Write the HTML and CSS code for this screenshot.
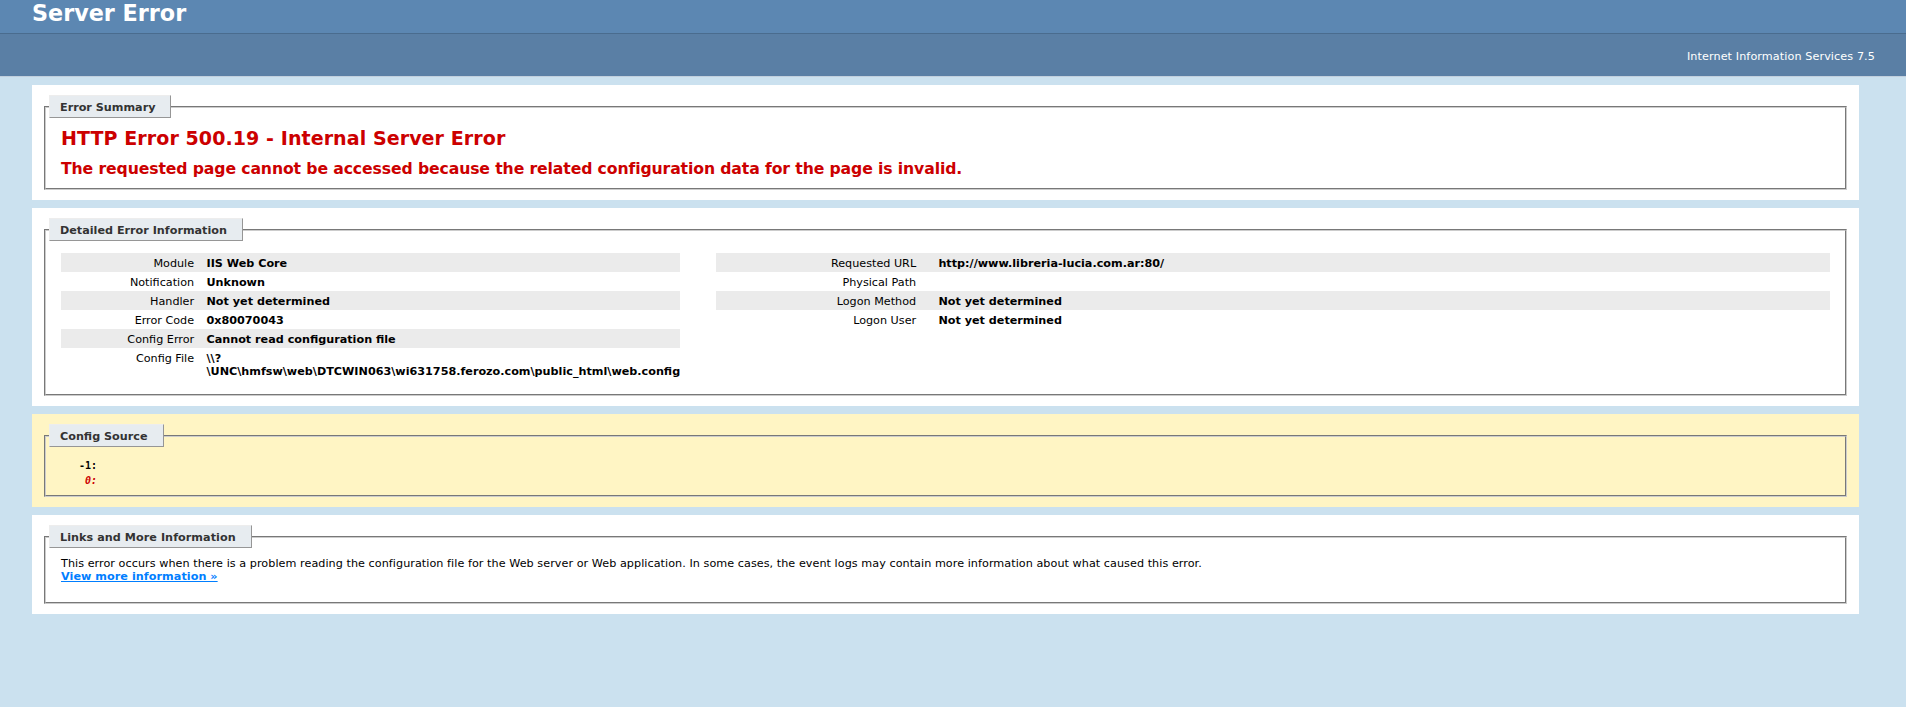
FILE: index.html
```html
<!DOCTYPE html>
<html>
<head>
<meta charset="utf-8">
<title>IIS 7.5 Detailed Error - 500.19 - Internal Server Error</title>
<link rel="stylesheet" href="styles.css">
</head>
<body>
<div class="header"><h1>Server Error</h1></div>
<div class="server-version"><p>Internet Information Services 7.5</p></div>
<div class="content">
  <div class="content-container">
    <fieldset>
      <legend>Error Summary</legend>
      <h2>HTTP Error 500.19 - Internal Server Error</h2>
      <h3>The requested page cannot be accessed because the related configuration data for the page is invalid.</h3>
    </fieldset>
  </div>
  <div class="content-container">
    <fieldset>
      <legend>Detailed Error Information</legend>
      <div class="details-left">
        <table>
          <tr class="alt"><th>Module</th><td>IIS Web Core</td></tr>
          <tr><th>Notification</th><td>Unknown</td></tr>
          <tr class="alt"><th>Handler</th><td>Not yet determined</td></tr>
          <tr><th>Error Code</th><td>0x80070043</td></tr>
          <tr class="alt"><th>Config Error</th><td>Cannot read configuration file</td></tr>
          <tr><th>Config File</th><td>\\?\UNC\hmfsw\web\DTCWIN063\wi631758.ferozo.com\public_html\web.config</td></tr>
        </table>
      </div>
      <div class="details-right">
        <table>
          <tr class="alt"><th>Requested URL</th><td>http://www.libreria-lucia.com.ar:80/</td></tr>
          <tr><th>Physical Path</th><td></td></tr>
          <tr class="alt"><th>Logon Method</th><td>Not yet determined</td></tr>
          <tr><th>Logon User</th><td>Not yet determined</td></tr>
        </table>
      </div>
      <div class="clear"></div>
    </fieldset>
  </div>
  <div class="content-container config-source">
    <fieldset>
      <legend>Config Source</legend>
      <pre class="source"><code>   -1: </code>
<code class="highlight-code">    0: </code></pre>
    </fieldset>
  </div>
  <div class="content-container links">
    <fieldset>
      <legend>Links and More Information</legend>
      This error occurs when there is a problem reading the configuration file for the Web server or Web application. In some cases, the event logs may contain more information about what caused this error.
      <p><a href="#">View more information &raquo;</a></p>
    </fieldset>
  </div>
</div>
</body>
</html>
```

FILE: styles.css
```css
body {
  margin: 0;
  font-size: 11.2px;
  font-family: "DejaVu Sans", Verdana, sans-serif;
  background: #CBE1EF;
  color: #000;
}

.header {
  height: 33px;
  box-sizing: border-box;
  padding: 0 32px;
  background: #5C87B2;
}

.header h1 {
  margin: 0;
  font: bold 22.3px/26px "DejaVu Sans", sans-serif;
  color: #fff;
}

.server-version {
  margin: 0 0 5px 0;
  padding: 11px 31px 8px 31px;
  background: #5A7FA5;
  border-top: 1px solid #4A6C8E;
  border-bottom: 1px solid #C1CFDD;
  color: #fff;
  text-align: right;
  letter-spacing: 0.1px;
}

.server-version p {
  margin: 5px 0;
}

.content {
  margin: 0 47px 0 32px;
}

.content-container {
  background: #fff;
  margin-top: 8px;
  padding: 10px;
}

.config-source {
  background: #FFF5C4;
}

fieldset {
  margin: 0 2px;
  padding: 0 15px 10px 15px;
  border: 2px groove #cccccc;
  min-width: 0;
}

legend {
  color: #333333;
  padding: 5px 15px 3px 10px;
  margin: 0 0 8px -12px;
  border-top: 1px solid #EDEDED;
  border-left: 1px solid #EDEDED;
  border-right: 1px solid #969696;
  border-bottom: 1px solid #969696;
  background: #E7ECF0;
  font-weight: bold;
  font-size: 1em;
}

h2 {
  font-size: 19.04px;
  line-height: 22px;
  padding-top: 1px;
  margin: 0;
  color: #CC0000;
  letter-spacing: 0.07px;
}

h3 {
  font-size: 15.68px;
  line-height: 18px;
  padding-top: 1px;
  margin: 10px 0 0 0;
  color: #CC0000;
  letter-spacing: -0.12px;
}

.details-left {
  width: 35%;
  float: left;
  margin-right: 2%;
}

.details-right {
  width: 63%;
  float: left;
  overflow: hidden;
}

.clear {
  clear: both;
}

table {
  margin: 4px 0;
  width: 100%;
  border: none;
  border-spacing: 0;
  border-collapse: separate;
}

td, th {
  vertical-align: top;
  padding: 4px 0 2px 0;
  text-align: left;
  font-weight: bold;
  border: none;
}

th {
  width: 30%;
  text-align: right;
  padding-right: 2%;
  font-weight: normal;
}

.details-right th {
  width: 20%;
}

tr.alt td, tr.alt th {
  background-color: #ebebeb;
}

.config-source fieldset {
  padding-bottom: 7px;
}

.source {
  margin: 0;
  padding-top: 3px;
  font: 10px/15px "DejaVu Sans Mono", "Liberation Mono", monospace;
}

.source code {
  font: inherit;
  font-weight: bold;
  color: #000;
}

.source .highlight-code {
  color: #CC0000;
  font-style: italic;
}

.links fieldset {
  padding-top: 1px;
  padding-bottom: 9px;
  letter-spacing: 0.05px;
}

.content-container p {
  margin: 0 0 10px 0;
}

a:link, a:visited {
  color: #007EFF;
  font-weight: bold;
}
```
